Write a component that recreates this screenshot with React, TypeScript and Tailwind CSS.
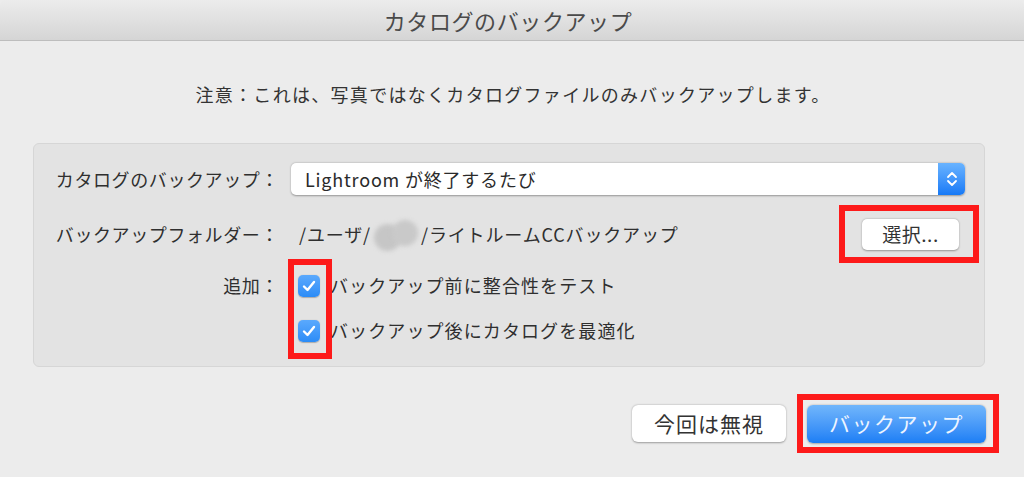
import React from 'react';

const jp = { fontFamily: '"Noto Sans CJK JP", "Noto Sans", sans-serif' };

const Check: React.FC = () => (
  <span className="flex h-[22px] w-[22px] items-center justify-center rounded-[5px] bg-gradient-to-b from-[#5aa9fd] to-[#2b8cf7] shadow-[0_0.5px_1px_rgba(0,0,0,0.25)]">
    <svg viewBox="0 0 22 22" className="h-[22px] w-[22px]">
      <path d="M6 11.5 L9.5 15 L16 7" fill="none" stroke="#fff" strokeWidth="2.4" strokeLinecap="round" strokeLinejoin="round" />
    </svg>
  </span>
);

const BlurName: React.FC = () => (
  <span className="relative mx-[2px] inline-block h-[32px] w-[46px] align-middle">
    <span className="absolute left-[1px] top-[5px] h-[27px] w-[27px] rounded-full bg-[#c6c6c6] blur-[2px]" />
    <span className="absolute left-[19px] top-[1px] h-[26px] w-[26px] rounded-full bg-[#c9c9c9] blur-[2px]" />
  </span>
);

export default function App() {
  return (
    <div className="relative h-[477px] w-[1024px] overflow-hidden bg-[#ececec] text-[#2f2f2f]" style={jp}>
      {/* title bar */}
      <div className="flex h-[41px] items-center justify-center rounded-t-[6px] border-b border-[#bdbdbd] bg-gradient-to-b from-[#ececec] to-[#d5d5d5]">
        <span className="mr-[8px] text-[22px] leading-none tracking-[0.6px] text-[#4a4a4a]">カタログのバックアップ</span>
      </div>

      {/* note */}
      <div className="mt-[41px] flex h-[24px] items-center justify-center pl-[2px]">
        <span className="text-[18px] leading-none tracking-[1.3px] text-[#333]">注意：これは、写真ではなくカタログファイルのみバックアップします。</span>
      </div>

      {/* settings group */}
      <div className="ml-[33px] mt-[37px] flex h-[224px] w-[952px] flex-col rounded-[6px] border border-[#d6d6d6] bg-[#e3e3e3] pr-[19px] pt-[19px]">
        <div className="flex h-[32px] items-center">
          <span className="w-[245px] text-right text-[18px] tracking-[0.6px]">カタログのバックアップ：</span>
          <div className="ml-[12px] flex h-[32px] flex-1 items-stretch overflow-hidden rounded-[5px] bg-white shadow-[0_0.5px_2px_rgba(0,0,0,0.35)]">
            <span className="flex flex-1 items-center pl-[14px] text-[18px] tracking-[0.8px] text-[#2a2a2a]">Lightroom が終了するたび</span>
            <span className="flex w-[27px] flex-col items-center justify-center bg-gradient-to-b from-[#68b3ff] to-[#1479f6]">
              <svg viewBox="0 0 14 20" className="h-[20px] w-[14px]">
                <path d="M3 8 L7 4 L11 8 M3 12 L7 16 L11 12" fill="none" stroke="#fff" strokeWidth="1.8" strokeLinecap="round" strokeLinejoin="round" />
              </svg>
            </span>
          </div>
        </div>

        <div className="mt-[24px] flex h-[31px] items-center">
          <span className="w-[245px] text-right text-[18px] tracking-[0.6px]">バックアップフォルダー：</span>
          <span className="ml-[20px] flex flex-1 items-center text-[18px] tracking-[0.85px]">
            /ユーザ/<BlurName />/ライトルームCCバックアップ
          </span>
          <button className="mr-[6px] flex h-[31px] w-[97px] items-center justify-center rounded-[5px] bg-white text-[19px] tracking-[0.5px] text-[#333] shadow-[0_0.5px_2px_rgba(0,0,0,0.35)]">
            選択...
          </button>
        </div>

        <div className="mt-[24px] flex h-[23px] items-center">
          <span className="w-[245px] text-right text-[18px] tracking-[0.6px]">追加：</span>
          <span className="ml-[19px]"><Check /></span>
          <span className="ml-[10px] text-[18px] tracking-[1.1px]">バックアップ前に整合性をテスト</span>
        </div>

        <div className="mt-[22px] flex h-[23px] items-center">
          <span className="w-[245px]" />
          <span className="ml-[19px]"><Check /></span>
          <span className="ml-[10px] text-[18px] tracking-[1.1px]">バックアップ後にカタログを最適化</span>
        </div>
      </div>

      {/* buttons */}
      <div className="mt-[38px] flex justify-end gap-[21px] pr-[38px]">
        <button className="flex h-[37px] w-[154px] items-center justify-center rounded-[6px] bg-white text-[21px] tracking-[1px] text-[#333] shadow-[0_0.5px_2px_rgba(0,0,0,0.35)]">
          今回は無視
        </button>
        <button className="flex h-[38px] w-[179px] items-center justify-center rounded-[6px] bg-gradient-to-b from-[#71b6fb] to-[#1a7ef5] text-[21px] tracking-[1.5px] text-[#eef5ff] shadow-[0_0.5px_2px_rgba(0,0,0,0.3)]">
          バックアップ
        </button>
      </div>

      {/* red annotation boxes */}
      <div className="pointer-events-none absolute left-[839px] top-[205px] h-[58px] w-[140px] border-[6px] border-[#fd1a1a]" />
      <div className="pointer-events-none absolute left-[288px] top-[259px] h-[100px] w-[44px] border-[6px] border-[#fd1a1a]" />
      <div className="pointer-events-none absolute left-[797px] top-[394px] h-[59px] w-[202px] border-[6px] border-[#fd1a1a]" />
    </div>
  );
}
